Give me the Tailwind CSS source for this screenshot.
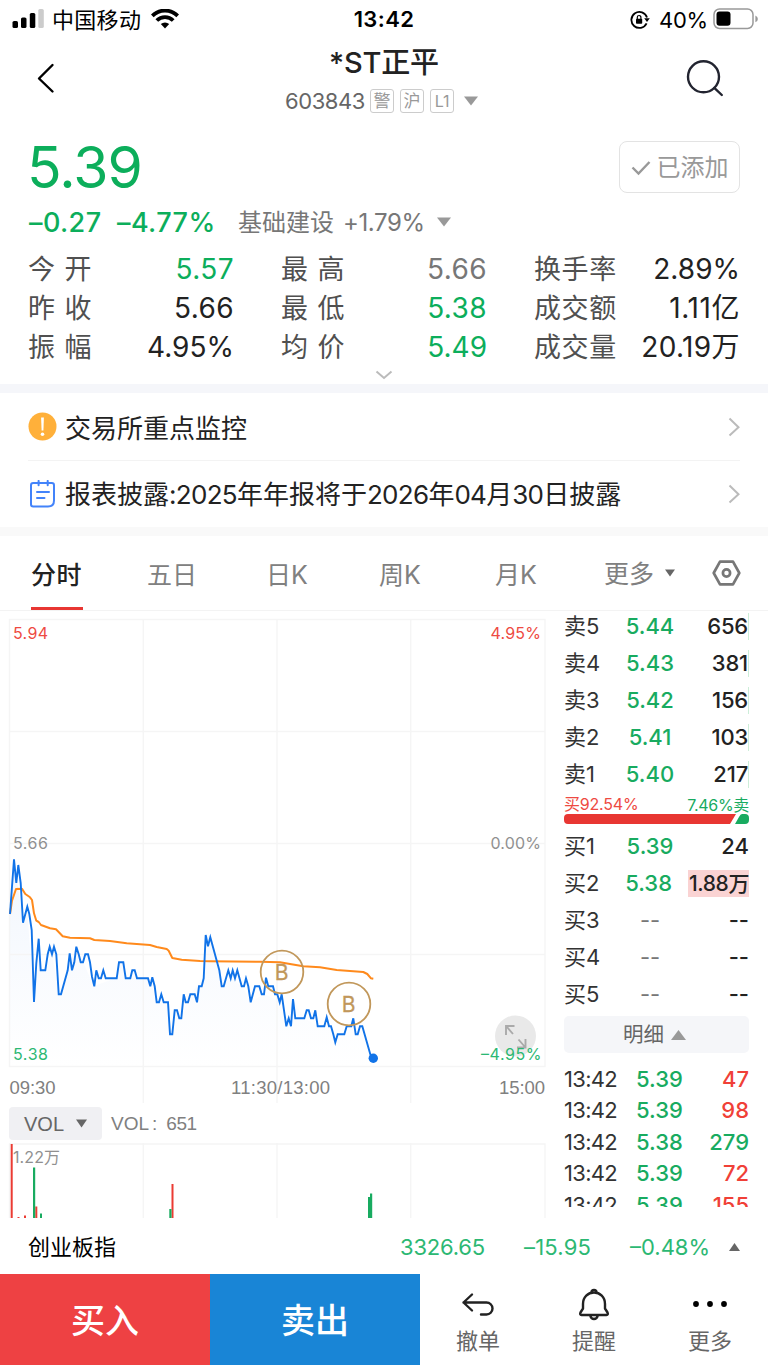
<!DOCTYPE html>
<html lang="zh-CN">
<head>
    <meta charset="UTF-8">
    <meta name="viewport" content="width=device-width, initial-scale=1.0">
    <title>*ST正平 603843</title>
    <script src="https://cdn.jsdelivr.net/npm/@tailwindcss/browser@4"></script>
    <style>
        body {
            font-family: 'Inter', 'Noto Sans CJK SC', sans-serif;
            -webkit-font-smoothing: antialiased;
        }
        .helv {
            font-family: 'Liberation Sans', 'Noto Sans CJK SC', sans-serif;
        }
    </style>
</head>
<body class="w-[768px] h-[1366px] bg-white text-[#222] overflow-hidden whitespace-nowrap">

    <!-- Status bar -->
    <div class="h-[38px] px-3 flex items-center text-black relative">
        <svg class="w-8 h-5 shrink-0" viewBox="0 0 32 20">
            <rect x="0.5" y="12" width="5.5" height="7" rx="1.6"/>
            <rect x="9" y="8.5" width="5.5" height="10.5" rx="1.6"/>
            <rect x="17.8" y="4" width="5.5" height="15" rx="1.6"/>
            <rect x="26.3" y="0" width="5.5" height="19" rx="1.6" fill="#ccc"/>
        </svg>
        <span class="ml-2 pt-px text-[22px] leading-[38px] tracking-[0.3px]">中国移动</span>
        <svg class="ml-2.5 w-7 h-5 shrink-0" viewBox="0 0 28 20" fill="none" stroke="#000" stroke-width="3.8">
            <path d="M1.3 6.8a18 18 0 0 1 25.4 0"/>
            <path d="M5.8 11.5a11.6 11.6 0 0 1 16.4 0"/>
            <path d="M14 19.5l-4.2-4.4a6 6 0 0 1 8.4 0z" fill="#000" stroke="none"/>
        </svg>
        <span class="absolute left-0 w-full pt-px text-center text-[22px] font-semibold tracking-[0.4px]">13:42</span>
        <svg class="ml-auto w-5 h-5 shrink-0" viewBox="0 0 20 20" fill="none" stroke="#000" stroke-width="1.8">
            <path d="M16.6 14.4A8 8 0 1 1 17 8.5"/>
            <path d="M14.2 9.2h5.6L17 13z" fill="#000" stroke="none"/>
            <rect x="6" y="9.8" width="6.2" height="5" rx="0.8" fill="#000" stroke="none"/>
            <path d="M7.3 10V8.3a1.8 1.8 0 0 1 3.6 0V10" stroke-width="1.2"/>
        </svg>
        <span class="ml-[9px] pt-0.5 text-[22px] tracking-[-0.2px]">40%</span>
        <svg class="ml-[5px] -mr-[3px] w-[46px] h-[22px] shrink-0" viewBox="0 0 46 22">
            <rect x="1" y="1" width="39" height="19.5" rx="5.5" fill="none" stroke="#999" stroke-width="1.5"/>
            <rect x="3.5" y="3.6" width="14" height="14.2" rx="3" fill="#000"/>
            <path d="M42.4 7.5q2.5 1.2 2.5 3.4t-2.5 3.4z" fill="#999"/>
        </svg>
    </div>

    <!-- Title bar -->
    <header class="h-[87px] px-7 flex justify-between relative">
        <svg class="mt-[24px] ml-[8px] w-5 h-8" viewBox="0 0 20 32" fill="none" stroke="#000" stroke-width="2.4" stroke-linecap="round" stroke-linejoin="round">
            <path d="M16.5 3L3 16.5L16.5 29.5"/>
        </svg>
        <div class="absolute inset-x-0 top-0 flex flex-col items-center">
            <h1 class="h-[48px] leading-[49px] text-[29px] font-medium tracking-[-0.2px]">*ST正平</h1>
            <div class="h-[30px] pr-[4px] flex items-center text-[#666]">
                <span class="text-[22px] tracking-[-0.4px] mr-[5px]">603843</span>
                <span class="w-6 h-6 mr-1.5 border border-[#ccc] rounded-[3px] text-[17px] leading-[23px] flex justify-center text-[#999]">警</span>
                <span class="w-6 h-6 mr-1.5 border border-[#ccc] rounded-[3px] text-[17px] leading-[23px] flex justify-center text-[#999]">沪</span>
                <span class="w-6 h-6 mr-[9px] border border-[#ccc] rounded-[3px] text-[16px] leading-[23px] flex justify-center text-[#999]">L1</span>
                <svg class="w-4 h-[10px]" viewBox="0 0 16 10"><path d="M1 0.5h14L8 9.5z" fill="#999"/></svg>
            </div>
        </div>
        <svg class="mt-[21px] mr-[15px] w-[40px] h-[40px]" viewBox="0 0 40 40" fill="none" stroke="#222430" stroke-width="2.4">
            <circle cx="18.5" cy="17.8" r="15.5"/>
            <path d="M29.3 28.8l7.5 7.2" stroke-linecap="round"/>
        </svg>
    </header>

    <!-- Quote summary -->
    <section class="h-[259px] px-7 relative">
        <div class="flex justify-between">
            <div class="h-[76px] -ml-px leading-[86px] text-[57px] font-normal text-[#0cae5b] tracking-[-0.9px]">5.39</div>
            <button class="mt-4 w-[121px] h-[52px] pt-0.5 border border-[#e3e3e3] rounded-lg flex items-center justify-center text-[#999] text-[24px]">
                <svg class="w-5 h-4 mr-1.5" viewBox="0 0 20 16" fill="none" stroke="#999" stroke-width="2.4"><path d="M1.5 7.5l6 6L18.5 2"/></svg>已添加
            </button>
        </div>
        <div class="h-[42px] flex items-center">
            <span class="w-[88px] pl-px pt-0.5 text-[27px] font-[450] text-[#0cae5b] tracking-[0.4px]">–0.27</span>
            <span class="w-[122px] pl-px pt-0.5 text-[27px] font-[450] text-[#0cae5b] tracking-[0.4px]">–4.77%</span>
            <span class="pt-0.5 text-[24px] text-[#777]">基础建设</span>
            <span class="w-[93px] pt-0.5 ml-[9px] text-[24px] text-[#777] tracking-[-0.4px]">+1.79%</span>
            <svg class="w-4 h-[10px]" viewBox="0 0 16 10"><path d="M1 0.5h14L8 9.5z" fill="#999"/></svg>
        </div>
        <div class="mt-[6px] grid grid-cols-[206px_206px_206px] gap-x-[47px] text-[27px] leading-[41px] text-[#505050]">
            <div class="flex justify-between h-[39px]"><span class="tracking-[0.9px]">今 开</span><span class="text-[28px] tracking-[0.4px] text-[#0cae5b]">5.57</span></div>
            <div class="flex justify-between h-[39px]"><span class="tracking-[0.9px]">最 高</span><span class="text-[28px] tracking-[0.4px] text-[#777]">5.66</span></div>
            <div class="flex justify-between h-[39px]"><span class="tracking-[0.6px]">换手率</span><span class="text-[28px] text-[#222]">2.89%</span></div>
            <div class="flex justify-between h-[39px]"><span class="tracking-[0.9px]">昨 收</span><span class="text-[28px] tracking-[0.4px] text-[#222]">5.66</span></div>
            <div class="flex justify-between h-[39px]"><span class="tracking-[0.9px]">最 低</span><span class="text-[28px] tracking-[0.4px] text-[#0cae5b]">5.38</span></div>
            <div class="flex justify-between h-[39px]"><span class="tracking-[0.6px]">成交额</span><span class="text-[28px] tracking-[0.6px] text-[#222]">1.11亿</span></div>
            <div class="flex justify-between h-[39px]"><span class="tracking-[0.9px]">振 幅</span><span class="text-[28px] text-[#222]">4.95%</span></div>
            <div class="flex justify-between h-[39px]"><span class="tracking-[0.9px]">均 价</span><span class="text-[28px] text-[#0cae5b]">5.49</span></div>
            <div class="flex justify-between h-[39px]"><span class="tracking-[0.6px]">成交量</span><span class="text-[28px] tracking-[0.4px] text-[#222]">20.19万</span></div>
        </div>
        <svg class="absolute left-[375px] bottom-[4px] w-[18px] h-[10px]" viewBox="0 0 18 10" fill="none" stroke="#bbb" stroke-width="2"><path d="M1.5 1.5l7.5 6.5 7.5-6.5"/></svg>
    </section>

    <!-- Notices -->
    <section class="border-y-[9px] border-t-[#f5f6fa] border-b-[#f9f9f9] h-[152px] px-7 text-[26px]">
        <div class="h-[68px] flex items-center border-b border-[#f3f3f3]">
            <svg class="w-[29px] h-[29px]" viewBox="0 0 29 29"><circle cx="14.5" cy="14.5" r="14" fill="#ffb03a"/><path d="M13.1 5.500h2.800l-.5 13h-1.800z" fill="#fff"/><circle cx="14.5" cy="22.200" r="1.8" fill="#fff"/></svg>
            <span class="ml-2 pt-[3px]">交易所重点监控</span>
            <svg class="ml-auto w-3 h-5" viewBox="0 0 12 20" fill="none" stroke="#bbb" stroke-width="2"><path d="M1.5 1.5l9 8.7-9 8.3"/></svg>
        </div>
        <div class="h-[66px] flex items-center">
            <svg class="w-[29px] h-[29px]" viewBox="0 0 29 29" fill="none" stroke="#4383fa" stroke-width="2" stroke-linecap="round">
                <path d="M3 5.2q0-2.2 2.2-2.2h18.600q2.200 0 2.200 2.200V20.500q0 6-6 6H5.200Q3 26.500 3 24.300z" stroke-linejoin="round"/>
                <path d="M10.600 0.900v4.300M19.700 0.900v4.300M9 12h12M9 18h7.500"/>
            </svg>
            <span class="ml-2 pt-px">报表披露<span class="tracking-[-0.7px]">:2025</span>年年报将于<span class="tracking-[-0.7px]">2026</span>年<span class="tracking-[-0.7px]">04</span>月<span class="tracking-[-0.7px]">30</span>日披露</span>
            <svg class="ml-auto w-3 h-5" viewBox="0 0 12 20" fill="none" stroke="#bbb" stroke-width="2"><path d="M1.5 1.5l9 8.7-9 8.3"/></svg>
        </div>
    </section>

    <!-- Period tabs -->
    <nav class="h-[75px] border-b border-[#f3f3f3] flex text-[25px] leading-[78px] text-[#808080]">
        <div class="ml-[31px] w-[52px] h-[74px] font-medium text-[#222] border-b-[3px] border-[#e83632] tracking-[0.4px]">分时</div>
        <div class="ml-[64px] w-[50px]">五日</div>
        <div class="ml-[69px] w-[42px]">日K</div>
        <div class="ml-[71px] w-[42px]">周K</div>
        <div class="ml-[74px] w-[42px]">月K</div>
        <div class="ml-[67px] h-[74px] flex items-center"><span class="pt-0.5">更多</span>
            <svg class="ml-[11px] w-[10px] h-2" viewBox="0 0 10 8"><path d="M0 0.500h10L5 7.500z" fill="#666"/></svg>
        </div>
        <svg class="mt-[24px] ml-auto mr-[27px] w-[29px] h-[26px]" viewBox="0 0 29 26" fill="none" stroke="#777" stroke-width="2.700" stroke-linejoin="round">
            <path d="M8 1.700h13l6.300 11.300L21 24.300H8L1.700 13z"/><circle cx="14.500" cy="13" r="3.600"/>
        </svg>
    </nav>

    <main class="h-[607px] flex">
        <div class="w-[555px]">
            <!-- Intraday price chart -->
            <svg class="helv w-[555px] h-[493px] block" viewBox="0 0 555 493">
                <defs>
                    <linearGradient id="area" x1="0" y1="0" x2="0" y2="1">
                        <stop offset="0" stop-color="#eef4fd"/>
                        <stop offset="1" stop-color="#ffffff"/>
                    </linearGradient>
                </defs>
                <path fill="url(#area)" fill-opacity="0.8" d="M10 455V303L14 248L23 311L27 296L34 391L39 328L41 359H45L52 343L59 383L76 336L94 375L116 367L119 351H123L126 367H148L159 391H168L170 423L175 399L181 407L190 383L204 367L206 324L210 326L222 375L230 367L242 375L251 391L264 383L280 391L286 415L293 388L304 407L318 415H331L335 431L344 423L353 407L356 423L362 415L373 447V455z"/>
                <path stroke="#f5f5f5" stroke-width="1.400" fill="none" d="M9.500 8.500H545V455.500H9.500zM9.500 120.500H545M9.500 232.500H545M9.500 343.500H545M143.300 8.500V492M277 8.500V492M410.700 8.500V492"/>
                <polyline fill="none" stroke="#ff8a1c" stroke-width="2" stroke-linejoin="round" points="10,303 12,289.7 16,278 22,277.7 25.3,283 30,286.3 32,289 34,302.3 36.3,309.7 38.7,311 41,314 50,317.3 56,318.3 62.7,325.3 70,326.7 90,327.3 94.3,329 110,330 126.7,332.3 150,334 156.7,336 166.7,338 168.7,339.7 172.3,347 181.7,348.7 200,350 210,350.3 260,350.7 280,351.3 290,353 303.3,355.3 320,356.3 336.7,359 363.3,361 367.3,363 371,367.3 373.3,367.7"/>
                <polyline fill="none" stroke="#1173e8" stroke-width="1.900" points="10,303 14,248.3 16.3,272 18.3,254 20.7,272 23,311.7 27.3,295.7 29.3,303 31.7,319 34,391 36.3,352.3 38.7,327.7 40.7,359.3 45.3,359.3 47.7,343.3 49.7,335.7 52,343.3 54,335.7 56.3,343.3 58.7,383.3 61,383.3 67.7,359.3 69.7,342.3 72,359.3 74.3,351.3 76.3,335.7 78.7,343.3 80.7,351.3 83,351.3 85.3,343.3 88,343.3 90,351.3 92,365.7 94.3,375.3 96.3,359.3 98.7,367.3 101,367.3 103.3,359.3 105.7,367.3 116.7,367.3 119,351.3 123.3,351.3 125.7,367.3 130.3,367.3 132.3,359.3 134.7,359.3 137,367.3 148,367.3 150.3,375.3 152.3,366.3 154.7,375.3 156.7,391.3 159,391.3 161.3,383.3 163.7,391.3 168,391.3 170,423.3 172.3,423.3 174.7,399.3 177,399.3 179.3,407.3 181.3,407.3 183.7,383.3 185.7,391.3 188,391.3 190.3,383.3 194.7,383.3 197,391.3 199,375.3 201.7,375.3 203.7,367.3 205.7,324 208,335.3 210.3,326.3 219.3,359.3 221.7,375.3 223.7,375.3 228.3,359.3 230.7,367.3 232.7,359.3 235,367.3 237.3,359.3 241.7,375.3 244,375.3 246,367.3 248.3,375.3 250.7,391.3 255,375.3 259.3,375.3 261.7,383.3 264,383.3 266,366.7 268.3,375.3 273,375.3 275,383.3 277.3,383.3 279.7,391.3 281.7,383.3 286.3,415.3 288.7,407.3 291,415.3 293,388 295.3,407.3 304.3,407.3 306.7,399.3 308.7,399.3 311,407.3 313.3,407.3 315.3,399.3 317.7,415.3 324.3,415.3 326.7,406.3 329,415.3 331,415.3 333.3,423.3 335.3,431.3 337.7,423.3 344.3,423.3 346.7,415.3 351.3,415.3 353.3,407.3 355.7,423.3 357.7,423.3 360,415.3 362.3,415.3 371,445.7 373.3,447.3"/>
                <circle cx="373.3" cy="447.3" r="4.700" fill="#1173e8"/>
                <!-- Buy markers -->
                <g fill="none" stroke="#c1975a" stroke-width="1.800">
                    <circle cx="282" cy="361" r="21.300"/>
                    <circle cx="349" cy="393" r="21.300"/>
                </g>
                <g fill="#c1975a" font-size="21" text-anchor="middle" font-family="Inter">
                    <text x="281.500" y="368.500" stroke="#c1975a" stroke-width="0.300">B</text>
                    <text x="348.500" y="400.500" stroke="#c1975a" stroke-width="0.300">B</text>
                </g>
                <!-- Fullscreen button -->
                <circle cx="515.500" cy="425" r="20.500" fill="#e9e9e9"/>
                <path fill="none" stroke="#aaa" stroke-width="1.900" d="M506 424V415H514.500M506.500 415.500L513 423M525.500 428V436.500H517M518.500 428.500L525 436"/>
                <g font-family="Inter" font-size="16">
                    <text x="13" y="28" fill="#ee4a42" textLength="35">5.94</text>
                    <text x="490.500" y="28" fill="#ee4a42" textLength="50.500">4.95%</text>
                    <text x="13" y="238" fill="#909090" textLength="35">5.66</text>
                    <text x="490.500" y="238" fill="#909090" textLength="50.500">0.00%</text>
                    <text x="13" y="448.500" fill="#2cb873" textLength="35">5.38</text>
                    <text x="481" y="448.500" fill="#2cb873" textLength="60.500">–4.95%</text>
                </g>
                <g font-size="18.500" fill="#808080">
                    <text x="9.500" y="483" textLength="46">09:30</text>
                    <text x="231" y="483" textLength="99">11:30/13:00</text>
                    <text x="499" y="483" textLength="46">15:00</text>
                </g>
            </svg>
            <!-- Indicator selector -->
            <div class="helv h-[39px] flex items-start pt-[3px] pl-[9px]">
                <div class="w-[93px] h-[33px] bg-[#f0f0f3] rounded-[4px] flex items-center pl-[15px] text-[20px] text-[#666]">VOL
                    <svg class="ml-3 w-[11px] h-[9px]" viewBox="0 0 11 9"><path d="M0 0.500h11L5.500 8.500z" fill="#666"/></svg>
                </div>
                <span class="ml-[9px] leading-[34px] text-[19px] text-[#808080]">VOL<span class="ml-[3px] mr-[9px]">:</span><span class="tracking-[-0.5px]">651</span></span>
            </div>
            <!-- Volume bars -->
            <svg class="w-[555px] h-[75px] block" viewBox="0 0 555 75">
                <path stroke="#f5f5f5" stroke-width="1.400" fill="none" d="M9.500 75V1H545V75M143.300 0V75M277 0V75M410.700 0V75"/>
                <g fill="#eb3b33">
                    <rect x="10.700" y="1" width="2" height="74"/>
                    <rect x="17.500" y="74" width="2" height="1"/>
                    <rect x="24" y="72.500" width="2" height="2.500"/>
                    <rect x="35.300" y="63.500" width="2" height="11.500"/>
                    <rect x="171.500" y="41" width="2" height="34"/>
                </g>
                <g fill="#18ab60">
                    <rect x="33" y="24.500" width="2.200" height="50.500"/>
                    <rect x="40" y="70.500" width="2" height="4.500"/>
                    <rect x="169.300" y="66" width="2.200" height="9"/>
                    <rect x="368" y="54" width="2.200" height="21"/>
                    <rect x="370" y="50.500" width="2.200" height="24.500"/>
                </g>
                <text x="13" y="20" font-size="16" fill="#909090" textLength="47">1.22万</text>
            </svg>
        </div>

        <!-- Order book -->
        <div class="w-[185px] h-[596px] ml-[9px] overflow-hidden text-[22px]">
            <div class="-mt-[3px]" id="asks"></div>
            <div class="h-[21px] flex justify-between text-[16px] leading-[22px]">
                <span class="text-[#ee4a42] tracking-[-0.2px]">买92.54%</span>
                <span class="text-[#18ab60] tracking-[-0.3px] leading-[25px]">7.46%卖</span>
            </div>
            <svg class="block w-[185px] h-[10px]" viewBox="0 0 185 10">
                <path d="M4 0H172L166 10H4Q0 10 0 6V4Q0 0 4 0z" fill="#e83632"/>
                <path d="M178 0H181Q185 0 185 4V6Q185 10 181 10H171L175 3Q176.500 0 178 0z" fill="#18ab60"/>
            </svg>
            <div class="mt-[4px]" id="bids"></div>
            <div class="mt-[3px] h-[37px] pr-1 bg-[#f5f6f9] rounded-[5px] flex items-center justify-center text-[20.500px] text-[#666]"><span class="pt-0.5">明细</span>
                <svg class="ml-[7px] w-[15px] h-[10px]" viewBox="0 0 15 10"><path d="M0 10h15L7.500 0z" fill="#999"/></svg>
            </div>
            <div class="mt-[10px]" id="trades"></div>
        </div>
    </main>

    <!-- Index ticker -->
    <div class="h-[56px] pt-0.5 flex items-center text-[22px] text-[#2cb873]">
        <span class="ml-7 w-[372px] text-black">创业板指</span>
        <span class="w-[124px] tracking-[-0.200px]">3326.65</span>
        <span class="w-[106px] tracking-[0.2px]">–15.95</span>
        <span class="w-[99px]">–0.48%</span>
        <svg class="w-[11px] h-2" viewBox="0 0 11 8"><path d="M0 8h11L5.500 0z" fill="#666"/></svg>
    </div>

    <!-- Bottom actions -->
    <footer class="h-[91px] flex text-[22px] text-[#666]">
        <button class="w-[210px] pt-0.5 bg-[#ee4143] text-white text-[34px] font-medium">买入</button>
        <button class="w-[210px] pt-0.5 bg-[#1985d6] text-white text-[34px] font-medium">卖出</button>
        <div class="flex-1 grid grid-cols-3">
            <div class="flex flex-col items-center">
                <svg class="mt-[13px] w-[34px] h-[34px]" viewBox="0 0 34 34" fill="none" stroke="#222" stroke-width="2.400" stroke-linecap="round" stroke-linejoin="round">
                    <path d="M11 7.500L2.500 15.500L11 23.500M2.500 15.500H25.500a6 6 0 0 1 0 12H20"/>
                </svg>
                <span class="leading-[40px]">撤单</span>
            </div>
            <div class="flex flex-col items-center">
                <svg class="mt-[13px] w-[34px] h-[34px]" viewBox="0 0 34 34" fill="none" stroke="#222" stroke-width="2.400" stroke-linejoin="round">
                    <path d="M6 17C6 10 11 5.500 17 5.500S28 10 28 17V21.500L30.500 25.500Q31.500 28 29.500 28H4.500Q2.500 28 3.500 25.500L6 21.500z"/>
                    <path d="M14.500 5.500a2.500 2.500 0 1 1 5 0M13.300 28.500q.7 3.500 3.700 3.500t3.700-3.500"/>
                </svg>
                <span class="leading-[40px]">提醒</span>
            </div>
            <div class="flex flex-col items-center">
                <svg class="mt-[13px] w-[34px] h-[34px]" viewBox="0 0 34 34"><circle cx="3" cy="17" r="2.900"/><circle cx="17" cy="17" r="2.900"/><circle cx="31" cy="17" r="2.900"/></svg>
                <span class="leading-[40px]">更多</span>
            </div>
        </div>
    </footer>

    <script>
        const asks = [['卖5', '5.44', '656'], ['卖4', '5.43', '381'], ['卖3', '5.42', '156'], ['卖2', '5.41', '103'], ['卖1', '5.40', '217']];
        const bids = [['买1', '5.39', '24'], ['买2', '5.38', '1.88万'], ['买3', '--', '--'], ['买4', '--', '--'], ['买5', '--', '--']];
        const trades = [['5.39', '47', 1], ['5.39', '98', 1], ['5.38', '279', 0], ['5.39', '72', 1], ['5.39', '155', 1]];

        const level = ([name, price, vol], extra) => `
            <div class="h-[37px] leading-[37px] flex items-center">
                <span class="w-[46px] text-[#333]">${name}</span>
                <span class="w-[80px] text-center ${price === '--' ? 'text-[#777]' : 'text-[#18ab60] font-[450]'}">${price}</span>
                <span class="ml-auto h-[27px] leading-[27px] font-[450] ${extra}">${vol}</span>
            </div>`;

        document.getElementById('asks').innerHTML = asks.map(r => level(r, 'border-r border-[#cdeed9] tracking-[-0.2px]')).join('');
        document.getElementById('bids').innerHTML = bids.map(r => level(r, r[0] === '买2' ? 'bg-[#fad3d3] pl-[1px] text-[21px] tracking-[-0.4px]' : '')).join('');
        document.getElementById('trades').innerHTML = trades.map(([price, vol, up]) => `
            <div class="h-[31.400px] leading-[32px] flex">
                <span class="w-[72px] text-[#333] tracking-[-0.7px]">13:42</span>
                <span class="text-[#18ab60] font-[450]">${price}</span>
                <span class="ml-auto font-[450] ${up ? 'text-[#f04037]' : 'text-[#18ab60]'}">${vol}</span>
            </div>`).join('');
    </script>
</body>
</html>
